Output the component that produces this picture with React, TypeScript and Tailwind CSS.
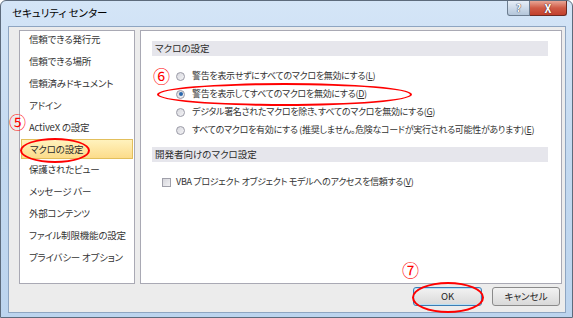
import React from "react"

const sideItems = [
  "信頼できる発行元",
  "信頼できる場所",
  "信頼済みドキュメント",
  "アドイン",
  "ActiveX の設定",
  "マクロの設定",
  "保護されたビュー",
  "メッセージ バー",
  "外部コンテンツ",
  "ファイル制限機能の設定",
  "プライバシー オプション",
]

const macroOptions = [
  { label: "警告を表示せずにすべてのマクロを無効にする", key: "L", checked: false },
  { label: "警告を表示してすべてのマクロを無効にする", key: "D", checked: true },
  { label: "デジタル署名されたマクロを除き、すべてのマクロを無効にする", key: "G", checked: false },
  {
    label: "すべてのマクロを有効にする (推奨しません。危険なコードが実行される可能性があります)",
    key: "E",
    checked: false,
  },
]

function Radio({ checked }: { checked: boolean }) {
  return (
    <span className="flex h-[9px] w-[9px] shrink-0 items-center justify-center rounded-full border border-[#9a9aa6] bg-gradient-to-br from-[#d8d8de] to-[#f4f4f6]">
      {checked && <span className="h-[4px] w-[4px] rounded-full bg-[#2a67ad]" />}
    </span>
  )
}

function SectionHeader({ title }: { title: string }) {
  return (
    <div className="flex h-[15px] items-center bg-[#e6e6ec] pl-[3px] text-[9.5px] text-[#2b2b2b]">
      {title}
    </div>
  )
}

export default function App() {
  return (
    <div className="relative flex h-[318px] w-[573px] flex-col overflow-hidden rounded-t-[6px] border border-[#5d6b7c] bg-gradient-to-b from-[#d4e5f7] via-[#c3d9f0] to-[#bcd4ee] font-['Noto_Sans_CJK_JP','Noto_Sans',sans-serif] [font-feature-settings:'palt']">
      {/* Title bar */}
      <div className="flex h-[25px] shrink-0 items-start">
        <div className="pl-[11px] pt-[5px] text-[10.5px] leading-[14px] text-black">セキュリティ センター</div>
        <div className="ml-auto mr-[5px] flex">
          <div className="flex h-[15px] w-[23px] items-center justify-center rounded-bl-[3px] border border-t-0 border-[#6c7d90] bg-gradient-to-b from-[#e6eef7] to-[#b4c6da] text-[10px] font-bold leading-none text-white [text-shadow:0_0_1px_#334,0_0_1px_#334]">
            ?
          </div>
          <div className="flex h-[15px] w-[37px] items-center justify-center rounded-br-[3px] border border-l-0 border-t-0 border-[#6b2a22] bg-gradient-to-b from-[#e8a595] via-[#cf5a45] to-[#c2402c] text-[11px] font-bold leading-none text-white [text-shadow:0_0_1px_#522,0_0_1px_#522]">
            X
          </div>
        </div>
      </div>

      {/* Client area */}
      <div className="mb-[4px] ml-[7px] mr-[6px] flex flex-1 flex-col border border-[#8ea5c1] bg-[#ececec] pl-[10px] pt-[3px]">
        <div className="flex h-[254px] gap-[5px]">
          {/* Left navigation */}
          <div className="w-[116px] border border-[#a9a9b4] bg-white">
            {sideItems.map((item) =>
              item === "マクロの設定" ? (
                <div key={item} className="h-[22px] px-[1px]">
                  <div className="-mt-[2px] flex h-[20px] items-center border border-[#e2bf5c] bg-gradient-to-b from-[#fff2bd] to-[#fcdc8a] pl-[8px] text-[9.5px] tracking-[-0.2px] text-[#2b2b2b]">
                    {item}
                  </div>
                </div>
              ) : (
                <div key={item} className="flex h-[22px] items-start pl-[9px] pt-[1px] text-[9.5px] leading-[14px] tracking-[-0.2px] text-[#333]">
                  {item}
                </div>
              )
            )}
          </div>

          {/* Right content */}
          <div className="w-[422px] border border-[#a9a9b4] bg-white pl-[11px] pr-[13px] pt-[10px]">
            <SectionHeader title="マクロの設定" />
            <div className="mt-[11px] flex flex-col">
              {macroOptions.map((o) => (
                <div key={o.key} className="flex h-[18px] items-center gap-[7px] pl-[24px] text-[9px] tracking-[-0.3px] text-[#333]">
                  <Radio checked={o.checked} />
                  <span className="whitespace-nowrap">
                    {o.label}(<span className="underline">{o.key}</span>)
                  </span>
                </div>
              ))}
            </div>
            <div className="mt-[8px]">
              <SectionHeader title="開発者向けのマクロ設定" />
            </div>
            <div className="mt-[11px] flex h-[18px] items-center gap-[5px] pl-[10px] text-[9px] tracking-[-0.3px] text-[#333]">
              <span className="h-[9px] w-[9px] shrink-0 border border-[#a0a0aa] bg-gradient-to-br from-[#d6d6dc] to-[#f2f2f4]" />
              <span className="whitespace-nowrap">
                VBA プロジェクト オブジェクト モデルへのアクセスを信頼する(<span className="underline">V</span>)
              </span>
            </div>
          </div>
        </div>

        {/* Buttons */}
        <div className="mt-[3px] flex justify-end gap-[10px] pr-[5px]">
          <button className="h-[19px] w-[69px] rounded-[3px] border border-[#3b7db4] bg-gradient-to-b from-[#f2f2f2] to-[#d9d9d9] text-[9.5px] leading-none text-[#222] shadow-[inset_0_0_0_1px_#b9e0f5]">
            OK
          </button>
          <button className="h-[19px] w-[68px] rounded-[3px] border border-[#8a8a8a] bg-gradient-to-b from-[#f2f2f2] to-[#d9d9d9] text-[9.5px] leading-none text-[#222]">
            キャンセル
          </button>
        </div>
      </div>

      {/* Red annotations */}
      <span className="pointer-events-none absolute left-[8px] top-[112px] text-[17px] leading-none text-[#ff0000]">⑤</span>
      <span className="pointer-events-none absolute left-[19px] top-[137px] h-[25px] w-[70px] rounded-[50%] border-[2.5px] border-[#ff0000]" />
      <span className="pointer-events-none absolute left-[152px] top-[66px] text-[17px] leading-none text-[#ff0000]">⑥</span>
      <span className="pointer-events-none absolute left-[156px] top-[82px] h-[23px] w-[255px] rounded-[50%] border-[2.5px] border-[#ff0000]" />
      <span className="pointer-events-none absolute left-[401px] top-[260px] text-[17px] leading-none text-[#ff0000]">⑦</span>
      <span className="pointer-events-none absolute left-[411px] top-[281px] h-[31px] w-[72px] rounded-[50%] border-[2.5px] border-[#ff0000]" />
    </div>
  )
}
